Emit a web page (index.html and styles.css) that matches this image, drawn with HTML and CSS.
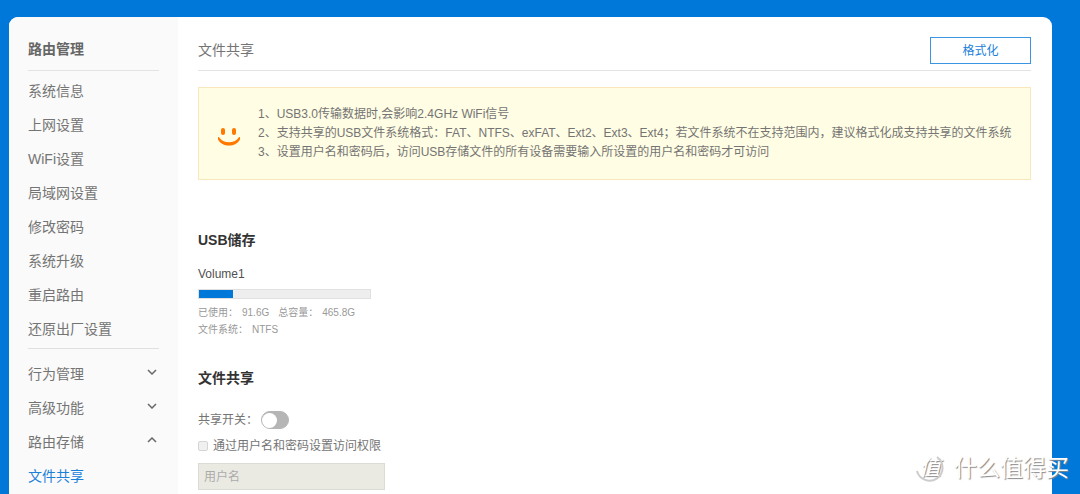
FILE: index.html
```html
<!DOCTYPE html>
<html lang="zh-CN">
<head>
<meta charset="utf-8">
<meta name="viewport" content="width=device-width, initial-scale=1">
<title>文件共享</title>
<link rel="stylesheet" href="styles.css">
</head>
<body>
<div class="panel">
  <nav class="sidebar" aria-label="路由管理">
    <h2 class="sidebar-title">路由管理</h2>
    <ul class="menu">
      <li><a class="menu-link" href="#info">系统信息</a></li>
      <li><a class="menu-link" href="#wan">上网设置</a></li>
      <li><a class="menu-link" href="#wifi">WiFi设置</a></li>
      <li><a class="menu-link" href="#lan">局域网设置</a></li>
      <li><a class="menu-link" href="#password">修改密码</a></li>
      <li><a class="menu-link" href="#upgrade">系统升级</a></li>
      <li><a class="menu-link" href="#reboot">重启路由</a></li>
      <li><a class="menu-link" href="#reset">还原出厂设置</a></li>
    </ul>
    <ul class="menu menu-groups">
      <li><button class="menu-link" type="button" aria-expanded="false">行为管理<svg class="chevron" viewBox="0 0 10 6" aria-hidden="true"><path d="M1 1l4 4 4-4"/></svg></button></li>
      <li><button class="menu-link" type="button" aria-expanded="false">高级功能<svg class="chevron" viewBox="0 0 10 6" aria-hidden="true"><path d="M1 1l4 4 4-4"/></svg></button></li>
      <li><button class="menu-link" type="button" aria-expanded="true">路由存储<svg class="chevron" viewBox="0 0 10 6" aria-hidden="true"><path d="M1 5l4-4 4 4"/></svg></button></li>
      <li><a class="menu-link active" href="#share" aria-current="page">文件共享</a></li>
    </ul>
  </nav>
  <main class="content">
    <header class="page-head">
      <h1 class="page-title">文件共享</h1>
      <button class="format-button" type="button">格式化</button>
    </header>
    <div class="notice">
      <svg class="smile" viewBox="0 0 22 18" aria-hidden="true"><rect x="3" y="0" width="4" height="7" rx="2"/><rect x="14" y="0" width="4" height="7" rx="2"/><path d="M0 9.200C.6 8.800 1.300 9.600 1.800 10.200 4 12.800 7 14.200 11 14.200s7-1.400 9.200-4c.5-.6 1.200-1.400 1.800-1v2.300C19.500 15.600 16 17.600 11 17.600S2.500 15.600 0 11.500z"/></svg>
      <ul class="notice-list">
        <li>1、USB3.0传输数据时,会影响2.4GHz WiFi信号</li>
        <li>2、支持共享的USB文件系统格式：FAT、NTFS、exFAT、Ext2、Ext3、Ext4；若文件系统不在支持范围内，建议格式化成支持共享的文件系统</li>
        <li>3、设置用户名和密码后，访问USB存储文件的所有设备需要输入所设置的用户名和密码才可访问</li>
      </ul>
    </div>
    <section class="storage">
      <h2 class="section-title">USB储存</h2>
      <p class="volume">Volume1</p>
      <div class="usage" role="img" aria-label="已使用 91.6G，总容量 465.8G"><div class="usage-fill" style="width:20%"></div></div>
      <dl class="facts">
        <div class="fact"><dt>已使用：</dt><dd>91.6G</dd></div>
        <div class="fact"><dt>总容量：</dt><dd>465.8G</dd></div>
      </dl>
      <dl class="facts">
        <div class="fact"><dt>文件系统：</dt><dd>NTFS</dd></div>
      </dl>
    </section>
    <section class="share">
      <h2 class="section-title">文件共享</h2>
      <div class="switch-row">
        <label for="share-switch">共享开关：</label>
        <input class="switch" type="checkbox" role="switch" id="share-switch">
      </div>
      <div class="check-row">
        <input class="check" type="checkbox" id="auth" disabled>
        <label for="auth">通过用户名和密码设置访问权限</label>
      </div>
      <input class="field" type="text" placeholder="用户名" aria-label="用户名" disabled>
    </section>
  </main>
</div>
<div class="watermark">
  <span class="watermark-badge"><svg class="watermark-ring" viewBox="0 0 30 30" aria-hidden="true"><path d="M22 4A13 13 0 1 1 2 18"/></svg>值</span>
  <span>什么值得买</span>
</div>
</body>
</html>
```

FILE: styles.css
```css
* {
  box-sizing: border-box;
}

html {
  height: 100%;
  overflow: hidden;
}

body {
  min-height: 100%;
  margin: 0;
  padding: 17px 28px 0 9px;
  background: #0078d9;
  color: #747474;
  font: 12px/18px "Liberation Sans", "Noto Sans CJK SC", sans-serif;
}

h1, h2, p, ul, dl, dd {
  margin: 0;
  padding: 0;
}

ul {
  list-style: none;
}

button, input {
  margin: 0;
  font: inherit;
}

.panel {
  display: flex;
  min-height: 100vh;
  border-radius: 9px;
  background: #fff;
  overflow: hidden;
}

.sidebar {
  flex: 0 0 169px;
  padding: 12px 19px 0;
  background: #fafafa;
  font-size: 14px;
}

.sidebar-title {
  padding: 3px 0 4px;
  border-bottom: 1px solid #e3e3e3;
  color: #666;
  font-size: 14px;
  line-height: 34px;
}

.menu {
  padding: 3px 0 2px;
}

.menu-groups {
  padding-top: 8px;
  border-top: 1px solid #e0e0e0;
}

.menu-link {
  display: flex;
  align-items: center;
  justify-content: space-between;
  width: 100%;
  height: 34px;
  padding: 0 2px 0 0;
  border: 0;
  background: none;
  color: #747474;
  line-height: 34px;
  text-decoration: none;
}

.menu-link.active {
  color: #1a80d8;
}

.chevron {
  width: 10px;
  height: 6px;
  margin-bottom: 4px;
  fill: none;
  stroke: #686868;
  stroke-width: 1.5;
}

.content {
  flex: 1;
  min-width: 0;
  padding: 12px 21px 0 20px;
}

.page-head {
  display: flex;
  align-items: center;
  justify-content: space-between;
  height: 42px;
  border-bottom: 1px solid #e3e3e3;
}

.page-title {
  font-size: 14px;
  font-weight: 400;
}

.format-button {
  width: 101px;
  height: 27px;
  margin-top: 1px;
  padding: 1px 0 0;
  border: 1px solid #3c95e0;
  background: #fff;
  color: #1a80d8;
}

.notice {
  display: flex;
  align-items: center;
  gap: 18px;
  margin-top: 16px;
  padding: 17px 19px;
  border: 1px solid #f8e6bd;
  background: #fffde3;
}

.smile {
  flex: none;
  width: 22px;
  height: 18px;
  margin-top: 6px;
  fill: #ff7800;
}

.notice-list {
  line-height: 19px;
  white-space: nowrap;
}

.storage {
  padding-top: 50px;
}

.section-title {
  color: #333;
  font-size: 14px;
  line-height: 20px;
}

.volume {
  margin-top: 15px;
  color: #505050;
}

.usage {
  width: 173px;
  height: 10px;
  margin: 6px 0 5px;
  border: 1px solid #e0e0e0;
  background: #eee;
}

.usage-fill {
  height: 100%;
  background: #0078d9;
}

.facts {
  display: flex;
  gap: 9px;
  color: #999;
  font-size: 10px;
  line-height: 17px;
}

.fact {
  display: flex;
  gap: 4px;
}

.share {
  padding-top: 30px;
}

.switch-row {
  display: flex;
  align-items: center;
  gap: 3px;
  margin-top: 23px;
}

.switch {
  display: flex;
  align-items: center;
  width: 28px;
  height: 18px;
  padding: 0;
  border: 1px solid #b5b5b5;
  border-radius: 9px;
  appearance: none;
  background: #b5b5b5;
}

.switch::before {
  width: 15px;
  height: 15px;
  border-radius: 50%;
  background: #fff;
  content: "";
}

.switch:checked {
  justify-content: flex-end;
  background: #0078d9;
}

.check-row {
  display: flex;
  align-items: center;
  gap: 5px;
  margin-top: 8px;
}

.check {
  width: 10px;
  height: 10px;
  border: 1px solid #d5d5d5;
  border-radius: 2px;
  appearance: none;
  background: #f0f0f0;
}

.field {
  display: block;
  width: 187px;
  height: 27px;
  margin-top: 8px;
  padding: 0 5px;
  border: 1px solid #dcdcd6;
  background: #eaeae3;
}

.field::placeholder {
  color: #aaa;
}

.watermark {
  position: absolute;
  right: 11px;
  bottom: 10px;
  display: flex;
  align-items: center;
  gap: 9px;
  color: #fff;
  font-size: 23px;
  line-height: 32px;
  text-shadow: 1px 1px 1px #888;
}

.watermark-badge {
  position: relative;
  width: 30px;
  font-size: 21px;
  font-style: italic;
  text-align: center;
}

.watermark-ring {
  position: absolute;
  inset: 1px 0;
  width: 30px;
  height: 30px;
  fill: none;
  stroke: #ccc;
  stroke-width: 2;
}
```
